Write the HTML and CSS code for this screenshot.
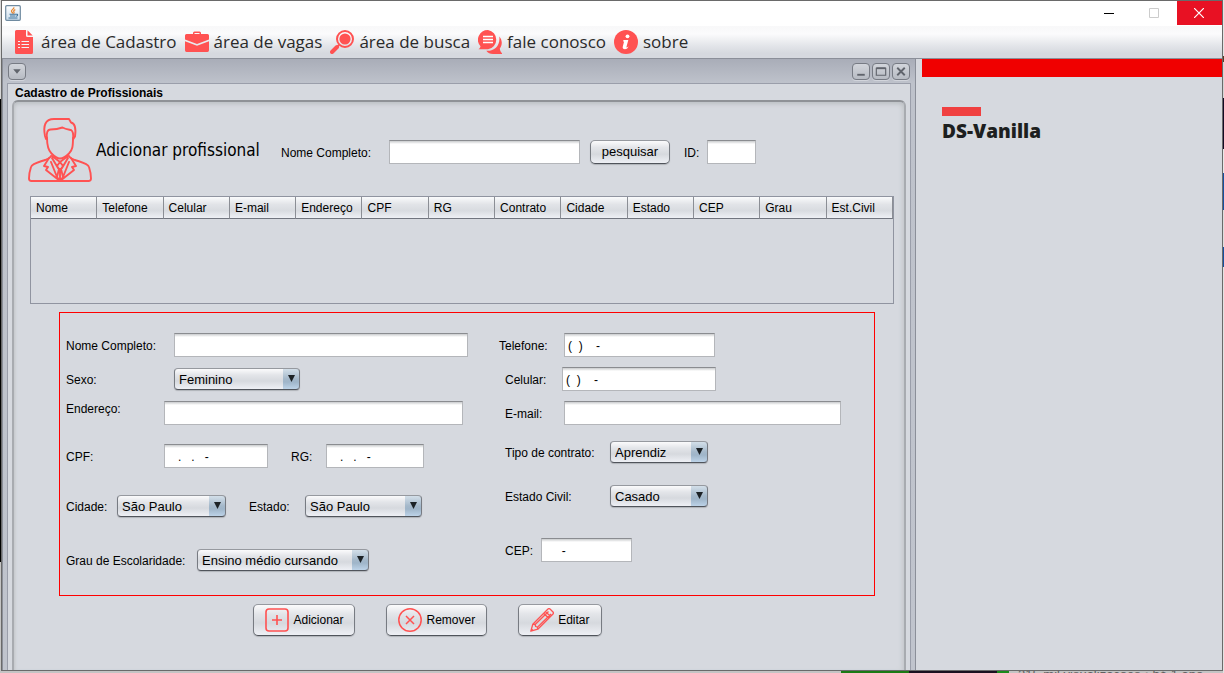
FILE: index.html
```html
<!DOCTYPE html>
<html lang="pt-BR">
<head>
<meta charset="utf-8">
<meta name="viewport" content="width=device-width, initial-scale=1">
<title>Cadastro de Profissionais</title>
<link rel="stylesheet" href="styles.css">
</head>
<body>
<div class="window">
  <header class="titlebar">
    <svg class="java" viewBox="0 0 16 16" aria-hidden="true">
      <defs><linearGradient id="jv" x1="0" y1="0" x2="0" y2="1"><stop offset="0" stop-color="#fff"/><stop offset="1" stop-color="#c9dcec"/></linearGradient></defs>
      <rect x=".7" y=".7" width="14.6" height="14.6" rx="1" fill="url(#jv)" stroke="#6f8aa0" stroke-width="1.2"/>
      <path d="M8.8 2.2C9.6 4 6 4.600 6.500 6.300 6.700 7.100 7.800 7.700 7.700 8.600M10.300 4.600C8.600 5.400 8.300 6 9 7 9.300 7.600 9 8.200 8.500 8.600" fill="none" stroke="#e8842c" stroke-width="1.200"/>
      <path d="M4.500 9.300h6.500M5 11h5.500M3.500 13h9M11 9.300c2.200-.6 2.200 1.700 0 1.900" fill="none" stroke="#41749b" stroke-width="1.100"/>
    </svg>
    <div class="wincontrols">
      <button type="button" aria-label="Minimizar"><svg viewBox="0 0 10 10"><path d="M0 5.500h10" stroke="#000"/></svg></button>
      <button type="button" aria-label="Maximizar" disabled><svg viewBox="0 0 10 10"><path d="M.5.5h9v9h-9z" stroke="#ccc" fill="none"/></svg></button>
      <button type="button" class="close" aria-label="Fechar"><svg viewBox="0 0 10 10"><path d="M0 0l10 10M10 0L0 10" stroke="#fff" stroke-width="1.200"/></svg></button>
    </div>
  </header>

  <nav class="menubar">
    <button type="button"><svg viewBox="0 0 24 24"><path fill="#ff5252" d="M4.500 0H14v5.500q0 1.500 1.500 1.500H21v15.500q0 1.500-1.500 1.500h-15Q3 24 3 22.500v-21Q3 0 4.500 0zM15.500.3L20.700 5.500h-5.200z"/><path d="M6 11.500h2m1.500 0H17M6 14.500h2m1.500 0H17M6 17.500h2m1.500 0H17" stroke="#f3f4f6" stroke-width="1.200"/></svg>área de Cadastro</button>
    <button type="button"><svg viewBox="0 0 24 24"><path fill="#ff5252" d="M8 4V3q0-1.500 1.500-1.500h5Q16 1.500 16 3v1h6.500Q24 4 24 5.500v4L12 14 0 9.500v-4Q0 4 1.500 4zM9.500 4h5V3h-5zM0 11.200l12 4.500 12-4.500v9q0 1.800-1.500 1.800h-21Q0 22 0 20.200z" fill-rule="evenodd"/></svg>área de vagas</button>
    <button type="button"><svg viewBox="0 0 24 24"><circle cx="15" cy="9" r="8" fill="none" stroke="#ff5252" stroke-width="2"/><circle cx="15" cy="9" r="5.600" fill="#ff5252"/><path d="M9 15l-3 3" stroke="#ff5252" stroke-width="2"/><path d="M7 17l-5 5" stroke="#ff5252" stroke-width="4" stroke-linecap="round"/></svg>área de busca</button>
    <button type="button"><svg viewBox="0 0 24 24"><path fill="#ff5252" d="M10 0a10 9.800 0 0 1 0 19.300H.5c1-.7 1.800-1.700 2-3A10 9.800 0 0 1 10 0z"/><path fill="#ff5252" d="M21.300 6.500c3.200 3.600 3.200 8.500.5 12 .2 2 1 3.800 2.200 4.700v.8h-9c-3 0-5-1-6.700-3.200C16 21.500 22.500 16 21.300 6.500z"/><path d="M5 6.500h10M5 9.500h10M5 12.500h10" stroke="#fff" stroke-width="1.300"/></svg>fale conosco</button>
    <button type="button"><svg viewBox="0 0 24 24"><circle cx="12" cy="12" r="12" fill="#ff5252"/><circle cx="13.500" cy="6.300" r="1.900" fill="#fff"/><path d="M9.500 10h4.800l-2 7.600c.8 0 1.500-.5 2.200-1.300-.5 2-1.900 3-3.600 3-1.700 0-2.600-1-2.100-2.800l1.300-4.900H9z" fill="#fff"/></svg>sobre</button>
  </nav>

  <div class="workspace">
    <section class="frame">
      <div class="frame-bar">
        <button type="button" class="fbtn" aria-label="Menu da janela"><svg viewBox="0 0 16 16"><path d="M4 5.500h8l-4 5z" fill="#60646c"/></svg></button>
        <div class="fbtns">
          <button type="button" class="fbtn" aria-label="Minimizar janela"><svg viewBox="0 0 16 16"><path d="M4 11.500h8" stroke="#60646c" stroke-width="2"/></svg></button>
          <button type="button" class="fbtn" aria-label="Maximizar janela"><svg viewBox="0 0 16 16"><path d="M3 4.500h10v7.500H3z" fill="none" stroke="#60646c" stroke-width="1.200"/><path d="M3 4.500h10" stroke="#60646c" stroke-width="2"/></svg></button>
          <button type="button" class="fbtn" aria-label="Fechar janela"><svg viewBox="0 0 16 16"><path d="M4 4l8 8M12 4l-8 8" stroke="#60646c" stroke-width="2"/></svg></button>
        </div>
      </div>
      <main class="content">
        <h1>Cadastro de Profissionais</h1>
        <div class="panel">
          <div class="head">
            <svg class="person" viewBox="0 0 64 64" fill="none" stroke="#ff5252" stroke-width="1.900" stroke-linejoin="round" stroke-linecap="round" aria-hidden="true">
              <path d="M18 21l-1-3C15 8 17 1 26 1h15l2 3.500c4.500 1 5 7 4 14l-2 3"/>
              <path d="M19 21c-1-6 .5-9.500 3.500-9.500 6 0 8-.5 12-2 3 1.800 6 2 8.500 2.500 2.500 1.500 2.500 5 2 9"/>
              <path d="M19 20c0 8 1 12 4.500 15.500C27 39 29 40.500 32 40.500s5.500-1.500 9-5C44.500 32 45 28 45 20"/>
              <path d="M23 38c-1 2.500-3 3-6 4C11 44 4 45.500 3 49c-1 3-2 8-2 11.500Q1 63 3.500 63h57q2.500 0 2.500-2.500C63 57 62 52 61 49c-1-3.500-8-5-14-7-3-1-5-1.500-6-4"/>
              <path d="M24 38l8 6 8-6M21 40l-5 8 4 1-2 3 14 11M43 40l5 8-4 1 2 3-14 11M24 40l6 10M40 40l-6 10M32 44l-3 4 2 3-2 8 3 4 3-4-2-8 2-3zM32 51v12M23 44l6 15M41 44l-6 15"/>
            </svg>
            <h2>Adicionar profissional</h2>
            <form class="search">
              <label class="w-search" for="busca">Nome Completo:</label>
              <input class="field w-busca" id="busca" type="text">
              <button class="btn btn-search" type="button">pesquisar</button>
              <label class="w-id" for="id">ID:</label>
              <input class="field w-idf" id="id" type="text">
            </form>
          </div>

          <div class="grid">
            <table>
              <thead><tr><th>Nome</th><th>Telefone</th><th>Celular</th><th>E-mail</th><th>Endereço</th><th>CPF</th><th>RG</th><th>Contrato</th><th>Cidade</th><th>Estado</th><th>CEP</th><th>Grau</th><th>Est.Civil</th></tr></thead>
            </table>
          </div>

          <form class="details">
            <div class="col left">
              <div class="row"><label class="w108" for="nome">Nome Completo:</label><input class="field w294" id="nome" type="text"></div>
              <div class="row near"><label class="w108" for="sexo">Sexo:</label><span class="combo w126"><select id="sexo"><option>Feminino</option><option>Masculino</option></select></span></div>
              <div class="row near"><label class="w98 high" for="end">Endereço:</label><input class="field w299" id="end" type="text"></div>
              <div class="row mid"><label class="w98" for="cpf">CPF:</label><input class="field w104" id="cpf" type="text" value="   .   .   -"><label class="w35 after" for="rg">RG:</label><input class="field w98" id="rg" type="text" value="   .   .   -"></div>
              <div class="row wide"><label class="w51" for="cidade">Cidade:</label><span class="combo w109"><select id="cidade"><option>São Paulo</option></select></span><label class="w56 after" for="estado">Estado:</label><span class="combo w117"><select id="estado"><option>São Paulo</option></select></span></div>
              <div class="row far"><label class="w131" for="grau">Grau de Escolaridade:</label><span class="combo w172"><select id="grau"><option>Ensino médio cursando</option></select></span></div>
            </div>
            <div class="col right">
              <div class="row out"><label class="w65" for="tel">Telefone:</label><input class="field w151" id="tel" type="text" value="(  )    -"></div>
              <div class="row near"><label class="w57" for="cel">Celular:</label><input class="field w154" id="cel" type="text" value="(  )    -"></div>
              <div class="row near"><label class="w59" for="email">E-mail:</label><input class="field w277" id="email" type="text"></div>
              <div class="row mid2"><label class="w105" for="tipo">Tipo de contrato:</label><span class="combo w98"><select id="tipo"><option>Aprendiz</option></select></span></div>
              <div class="row wide2"><label class="w105" for="civil">Estado Civil:</label><span class="combo w98"><select id="civil"><option>Casado</option><option>Solteiro</option></select></span></div>
              <div class="row far"><label class="w36" for="cep">CEP:</label><input class="field w91" id="cep" type="text" value="     -"></div>
            </div>
          </form>

          <div class="actions">
            <button class="btn" type="button"><svg viewBox="0 0 24 24" fill="none" stroke="#ff5252" stroke-width="1.600"><rect x="1" y="1" width="22" height="22" rx="3"/><path d="M12 7v10M7 12h10"/></svg>Adicionar</button>
            <button class="btn" type="button"><svg viewBox="0 0 24 24" fill="none" stroke="#ff5252" stroke-width="1.500"><circle cx="12" cy="12" r="11.200"/><path d="M8 8l8 8M16 8l-8 8"/></svg>Remover</button>
            <button class="btn" type="button"><svg viewBox="0 0 24 24" fill="none" stroke="#ff5252" stroke-width="1.300" stroke-linejoin="round"><path d="M.8 23.200l2-7L18 1q1-.8 2 0l3 3q.8 1 0 2L7.800 21.200zM2.800 16.200l2.300.3.600 2 1.800.6.300 2.100M5.100 16.500L18.500 3.500M7.500 19.100L21 6M15.500 3.500l5 5M13.700 5.300l5 5M1.500 21l1.500 1.600"/></svg>Editar</button>
          </div>
        </div>
      </main>
    </section>

    <aside class="side">
      <div class="banner"></div>
      <div class="brand"><span class="mark"></span><strong>DS-Vanilla</strong></div>
    </aside>
  </div>
</div>
<div class="behind"><span class="thumb"></span><span class="views">215 mil visualizações • há 1 ano</span></div>
</body>
</html>
```
FILE: styles.css
```css
* { box-sizing: border-box; }

body {
  margin: 0;
  min-height: 100vh;
  display: flex;
  flex-direction: column;
  padding: 0 1px;
  background:
    linear-gradient(#e4e4e4 56px, #5a3a22 56px 62px, #d5d5d5 62px 98px, #120a24 98px 149px, #e8e8e8 149px 173px, #1550a0 173px 210px, #dedede 210px 247px, #1550a0 247px 267px, #e2e2e2 267px) right top / 1px 100% no-repeat,
    linear-gradient(#d8d8d8 99px, #000 99px 562px, #c4c4c4 562px) left top / 1px 100% no-repeat,
    #c4c4c4;
  font: 12px/16px "Liberation Sans", Arial, sans-serif;
  color: #000;
}
button, input, select { font: inherit; color: inherit; margin: 0; }
button { padding: 0; border: 0; background: none; }
svg { display: block; flex: none; }

.window {
  flex: 1;
  display: flex;
  flex-direction: column;
  border: 1px solid #6a6a6a;
  background: #d6d9df;
}

/* Title bar */
.titlebar { display: flex; justify-content: space-between; height: 25px; background: #fff; }
.java { width: 16px; height: 16px; margin: 4px 3px; }
.wincontrols { display: flex; height: 24px; }
.wincontrols button { width: 45px; padding-right: 2px; display: grid; place-items: center; }
.wincontrols svg { width: 10px; height: 10px; }
.wincontrols .close { background: #e81123; }

/* Menu bar */
.menubar {
  display: flex;
  gap: 8px;
  padding: 0 10px;
  height: 33px;
  border-bottom: 1px solid #8b8f99;
  background: linear-gradient(#f8f8f9, #fbfbfc 25%, #e4e6ea 60%, #d6d9df 85%);
}
.menubar button { display: flex; align-items: center; gap: 5px; font: 17px/24px "Open Sans", sans-serif; color: #2a2a2a; white-space: nowrap; }
.menubar svg { width: 24px; height: 24px; }

.workspace { flex: 1; display: grid; grid-template-columns: minmax(0, 1fr) 306px; }

/* Inner frame */
.frame {
  display: flex;
  flex-direction: column;
  padding: 0 4px;
  border: solid #8b8f99;
  border-width: 0 1px;
  background: linear-gradient(#a9adb8, #bec2cb 24px, #c0c4cd);
}
.frame-bar { display: flex; justify-content: space-between; align-items: center; height: 24px; padding: 0 1px; }
.fbtns { display: flex; gap: 2px; }
.fbtn { width: 18px; height: 17px; display: grid; place-items: center; border: 1px solid #777b84; border-radius: 4px; background: linear-gradient(#d2d5db, #b7bbc3); box-shadow: 0 1px 0 #d2d5dc; }
.fbtn svg { width: 16px; height: 15px; }
.content { flex: 1; display: flex; flex-direction: column; padding: 0 4px; border: 1px solid #9a9eaa; border-bottom: 0; background: #d6d9df; }
h1 { margin: 0; padding: 2px 3px 0; font-size: 12px; line-height: 14px; }
.panel {
  flex: 1;
  padding: 16px 10px 30px 14px;
  border: solid #8f9297;
  border-width: 2px 2px 0;
  border-color: #8f9297 #a8abb0 #a8abb0;
  border-radius: 6px 6px 0 0;
  box-shadow: inset 0 3px 4px -1px #bcc0c4, inset -4px 0 5px -2px #c9ccd0, inset 3px 0 3px -2px #c9ccd0;
}

/* Search header */
.head { display: flex; align-items: center; }
.person { width: 64px; height: 64px; }
h2 { margin: 0 0 0 4px; width: 185px; font: 17px/24px "DejaVu Sans Condensed", "Noto Sans", sans-serif; white-space: nowrap; }
.search { display: flex; align-items: center; padding-top: 4px; }
.search label { padding-top: 2px; }
.field {
  height: 24px;
  padding: 2px 3px 0;
  border: 1px solid #b4b6ba;
  border-top-color: #8a8c90;
  border-radius: 0;
  background: linear-gradient(#c9cbcd, #fff 3px);
  white-space: pre;
}
.btn {
  display: flex;
  align-items: center;
  justify-content: center;
  border: 1px solid #777b82;
  border-top-color: #96999f;
  border-bottom-color: #50545b;
  border-radius: 5px;
  background: linear-gradient(#fbfbfc, #e3e5e9 30%, #d6d9de 60%, #eef0f5);
  box-shadow: 0 1px 1px #b0b3b8;
}
.btn-search { width: 80px; height: 24px; margin: 0 14px 0 10px; font-size: 13px; }
.w-search { width: 108px; }
.w-busca { width: 191px; }
.w-id { width: 23px; }
.w-idf { width: 49px; }

/* Results table */
.grid { height: 108px; margin: 14px 0 0 2px; border: 1px solid #9094a0; }
table { width: 100%; table-layout: fixed; border-collapse: separate; border-spacing: 0; }
th {
  height: 22px;
  padding: 0 0 0 5px;
  border-right: 1px solid #8b8e95;
  border-bottom: 1px solid #71757f;
  background: linear-gradient(#fafbfc, #e2e4e8 35%, #d8dbe0 65%, #eef0f5);
  font-weight: normal;
  text-align: left;
  white-space: nowrap;
}

/* Details form */
.details { display: grid; grid-template-columns: 439px minmax(0, 1fr); margin: 8px 19px 0 31px; padding: 20px 6px 23px; border: 1px solid #f00; }
.row { display: flex; align-items: center; height: 24px; }
.near { margin-top: 10px; }
.mid { margin-top: 19px; }
.mid2 { margin-top: 15px; }
.wide { margin-top: 26px; }
.wide2 { margin-top: 20px; }
.far { margin-top: 30px; }
.out { margin-left: -6px; }
.after { margin-left: 23px; }
.row label { flex: none; padding-top: 2px; white-space: nowrap; }
.row .high { align-self: flex-start; padding-top: 0; }

.combo { position: relative; display: block; height: 22px; }
.combo select {
  appearance: none;
  display: block;
  width: 100%;
  height: 22px;
  padding: 1px 18px 0 4px;
  border: 1px solid #777b82;
  border-top-color: #96999f;
  border-bottom-color: #50545b;
  border-radius: 4px;
  background:
    linear-gradient(#d3dfe9, #a4b8ca 50%, #9fb5c9 65%, #bdd3e8) right / 16px 100% no-repeat,
    linear-gradient(#fbfbfc, #e3e5e9 30%, #d6d9de 60%, #eef0f5);
  box-shadow: 0 1px 1px #b0b3b8;
  font-size: 13px;
}
.combo::after {
  content: "";
  position: absolute;
  top: 7px;
  right: 5px;
  width: 7px;
  height: 7px;
  background: #1c2226;
  clip-path: polygon(0 0, 100% 0, 50% 100%);
  pointer-events: none;
}

.w35 { width: 35px; }
.w36 { width: 36px; }
.w51 { width: 51px; }
.w56 { width: 56px; }
.w57 { width: 57px; }
.w59 { width: 59px; }
.w65 { width: 65px; }
.w91 { width: 91px; }
.w98 { width: 98px; }
.w104 { width: 104px; }
.w105 { width: 105px; }
.w108 { width: 108px; }
.w109 { width: 109px; }
.w117 { width: 117px; }
.w126 { width: 126px; }
.w131 { width: 131px; }
.w151 { width: 151px; }
.w154 { width: 154px; }
.w172 { width: 172px; }
.w277 { width: 277px; }
.w294 { width: 294px; }
.w299 { width: 299px; }

/* Action buttons */
.actions { display: flex; justify-content: center; gap: 31px; margin: 8px 67px 0 0; }
.actions .btn { height: 32px; padding: 0 11px; gap: 4px; }
.actions svg { width: 24px; height: 24px; }

/* Side panel */
.side { padding-left: 6px; }
.banner { height: 18px; background: #f00000; }
.brand { display: grid; gap: 4px; padding: 30px 20px; }
.mark { width: 39px; height: 9px; background: #f04040; }
.brand strong { font: 800 19px/22px "Open Sans", sans-serif; color: #1d1f20; }

/* Sliver of the desktop under the window */
.behind { display: flex; height: 2px; overflow: hidden; padding-left: 840px; }
.thumb { flex: none; width: 168px; background: linear-gradient(90deg, #1c7a14 68px, #1a1020 68px 156px, #1c8a1c 156px); }
.views { margin: -4px 0 0 9px; color: #606060; font-size: 13px; white-space: nowrap; }
```
